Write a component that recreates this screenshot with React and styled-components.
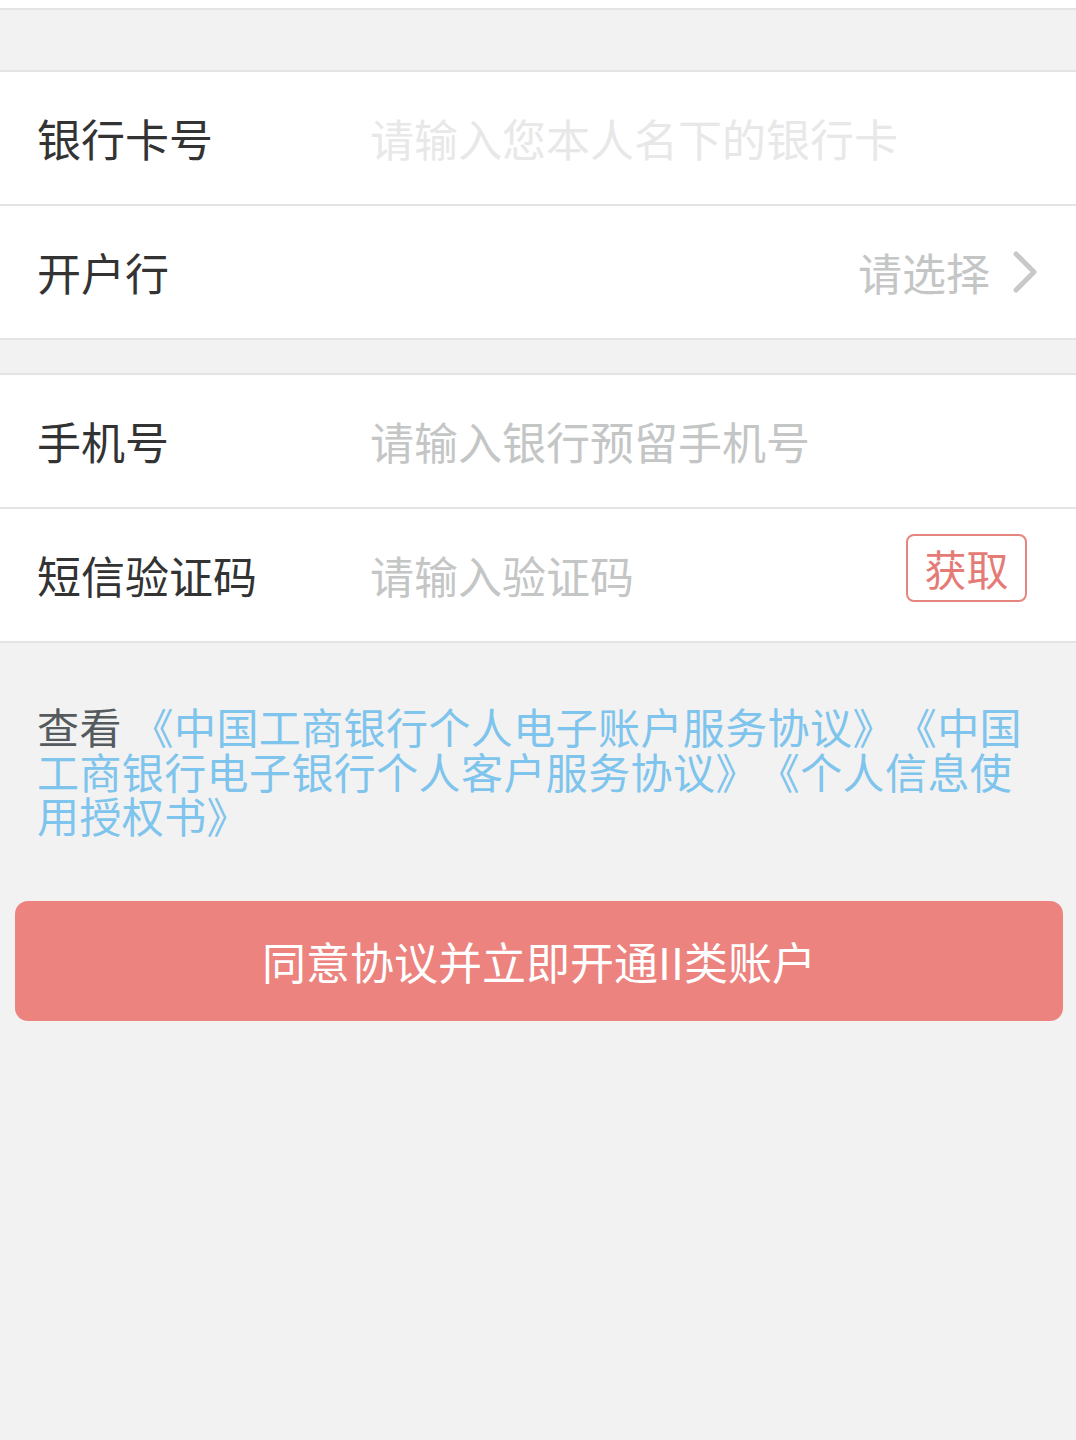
import React from "react";
import styled, { createGlobalStyle } from "styled-components";

const Global = createGlobalStyle`
  html, body { margin: 0; padding: 0; background: #f2f2f2; }
  body { font-family: "Noto Sans CJK SC", "Noto Sans", sans-serif; text-spacing-trim: space-all; }
  * { box-sizing: border-box; }
`;

const Page = styled.div`
  width: 1076px;
  min-height: 1440px;
  background: #f2f2f2;
  display: flex;
  flex-direction: column;
`;

const TopStrip = styled.div`
  height: 10px;
  background: #ffffff;
  border-bottom: 2px solid #e4e4e4;
`;

const Gap = styled.div`
  height: ${(p) => p.$h}px;
`;

const Group = styled.section`
  background: #ffffff;
  border-top: 2px solid #e4e4e4;
  border-bottom: 2px solid #e4e4e4;
  display: flex;
  flex-direction: column;
`;

const Row = styled.div`
  height: ${(p) => (p.$last ? 132 : 134)}px;
  display: flex;
  align-items: center;
  padding: 0 38px 0 37px;
  border-bottom: ${(p) => (p.$last ? "none" : "2px solid #e4e4e4")};
`;

const Label = styled.div`
  width: 333px;
  flex: none;
  font-size: 44px;
  color: #333333;
  line-height: 1;
`;

const Field = styled.input`
  flex: 1;
  min-width: 0;
  border: none;
  outline: none;
  background: transparent;
  padding: 0;
  font-family: inherit;
  font-size: 44px;
  color: #333;
  &::placeholder {
    color: ${(p) => p.$ph};
    opacity: 1;
  }
`;

const Spacer = styled.div`
  flex: 1;
`;

const Select = styled.div`
  display: flex;
  align-items: center;
  gap: 22px;
  font-size: 44px;
  color: #c4c6c6;
  line-height: 1;
`;

const CodeButton = styled.button`
  flex: none;
  width: 121px;
  height: 68px;
  margin: 0 11px 14px 0;
  border: 2px solid #e68480;
  border-radius: 8px;
  background: #ffffff;
  color: #e57b76;
  font-family: inherit;
  font-size: 42px;
  line-height: 1;
  padding: 0;
  display: flex;
  align-items: center;
  justify-content: center;
`;

const Agreement = styled.p`
  margin: 61px 37px 0 37px;
  font-size: 42px;
  line-height: 44.5px;
  letter-spacing: 0.4px;
  color: #555a5e;
  text-spacing-trim: space-all;
`;

const Link = styled.span`
  color: #7ec4ec;
`;

const Submit = styled.button`
  margin: 63px 13px 0 15px;
  height: 120px;
  border: none;
  border-radius: 13px;
  background: #ec837f;
  color: #ffffff;
  font-family: inherit;
  font-size: 44px;
  line-height: 1;
  padding: 0;
`;

const Chevron = () => (
  <svg width="26" height="44" viewBox="0 0 26 44" fill="none">
    <path d="M4 4 L22 22 L4 40" stroke="#c8c8c8" strokeWidth="5" strokeLinecap="round" strokeLinejoin="round" />
  </svg>
);

export default function App() {
  return (
    <Page lang="zh-CN">
      <Global />
      <TopStrip />
      <Gap $h={60} />
      <Group>
        <Row>
          <Label>银行卡号</Label>
          <Field $ph="#e8e8e8" placeholder="请输入您本人名下的银行卡" />
        </Row>
        <Row $last>
          <Label>开户行</Label>
          <Spacer />
          <Select>
            请选择
            <Chevron />
          </Select>
        </Row>
      </Group>
      <Gap $h={33} />
      <Group>
        <Row>
          <Label>手机号</Label>
          <Field $ph="#c4c6c6" placeholder="请输入银行预留手机号" />
        </Row>
        <Row $last>
          <Label>短信验证码</Label>
          <Field $ph="#c4c6c6" placeholder="请输入验证码" />
          <CodeButton>获取</CodeButton>
        </Row>
      </Group>
      <Agreement>
        查看 <Link>《中国工商银行个人电子账户服务协议》《中国工商银行电子银行个人客户服务协议》《个人信息使用授权书》</Link>
      </Agreement>
      <Submit>同意协议并立即开通II类账户</Submit>
    </Page>
  );
}
